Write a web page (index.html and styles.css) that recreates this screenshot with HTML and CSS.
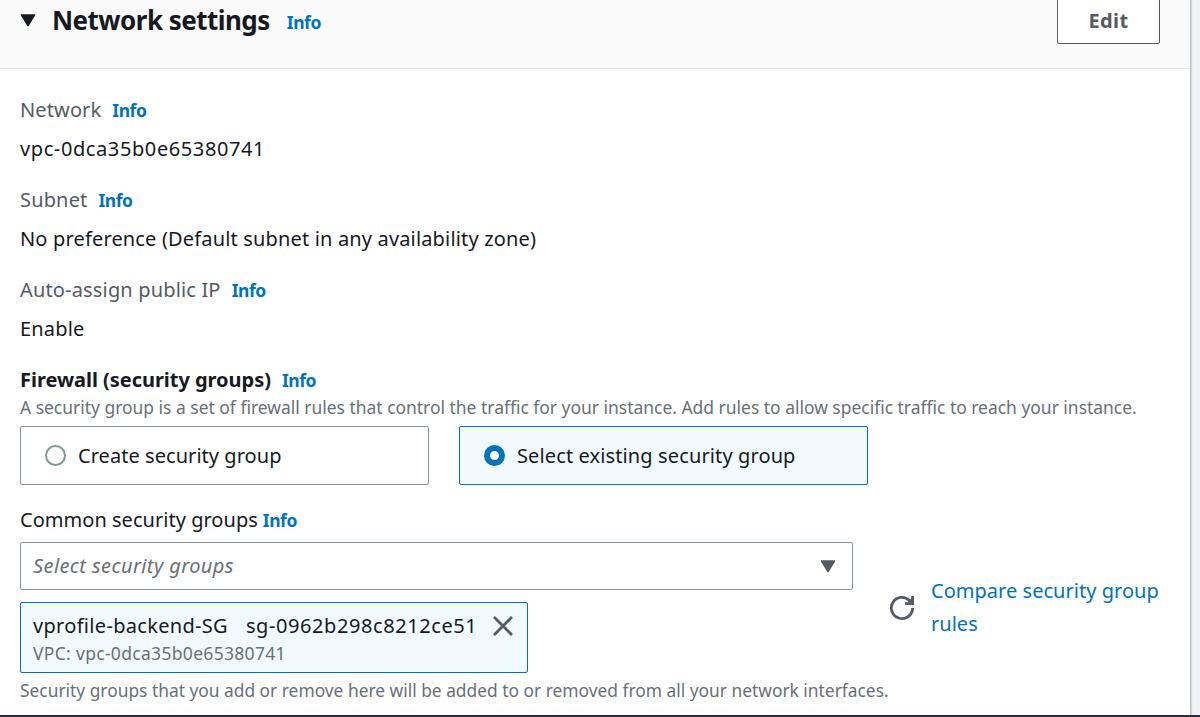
FILE: index.html
```
<!DOCTYPE html>
<html lang="en">
<head>
<meta charset="utf-8">
<title>Network settings</title>
<link rel="stylesheet" href="styles.css">
</head>
<body>
<main class="panel">
  <header class="panel-header">
    <svg class="caret" width="16" height="13" viewBox="0 0 16 13"><path d="M1.500 1h13L8 11.500z" fill="#16191f" stroke="#16191f" stroke-width="1.500" stroke-linejoin="round"/></svg>
    <h2 class="title">Network settings</h2>
    <a class="info info-title">Info</a>
    <button class="edit">Edit</button>
  </header>
  <section class="content">
    <div class="field">
      <div class="label"><span class="t-network">Network</span><a class="info">Info</a></div>
      <div class="value t-vpc">vpc-0dca35b0e65380741</div>
    </div>
    <div class="field">
      <div class="label"><span class="t-label">Subnet</span><a class="info">Info</a></div>
      <div class="value t-label">No preference (Default subnet in any availability zone)</div>
    </div>
    <div class="field">
      <div class="label"><span class="t-label">Auto-assign public IP</span><a class="info">Info</a></div>
      <div class="value t-label">Enable</div>
    </div>
    <div class="firewall-label"><span class="t-firewall">Firewall (security groups)</span><a class="info">Info</a></div>
    <p class="hint">A security group is a set of firewall rules that control the traffic for your instance. Add rules to allow specific traffic to reach your instance.</p>
    <div class="tiles">
      <div class="tile"><span class="radio"></span><span class="t-create">Create security group</span></div>
      <div class="tile selected"><span class="radio"></span><span class="t-existing">Select existing security group</span></div>
    </div>
    <div class="groups-label"><span class="t-common">Common security groups</span><a class="info">Info</a></div>
    <div class="groups-row">
      <div class="groups-main">
        <div class="select"><span class="t-placeholder">Select security groups</span>
          <svg width="16" height="13" viewBox="0 0 16 13"><path d="M1.500 1h13L8 11.500z" fill="#545b64" stroke="#545b64" stroke-width="1.500" stroke-linejoin="round"/></svg>
        </div>
        <div class="token">
          <div class="token-text">
            <div class="token-name"><span class="t-name">vprofile-backend-SG</span><span class="t-id">sg-0962b298c8212ce51</span></div>
            <div class="token-vpc">VPC: vpc-0dca35b0e65380741</div>
          </div>
          <svg class="close" width="20" height="20" viewBox="0 0 20 20"><path d="M1 1l18 18M19 1L1 19" stroke="#545b64" stroke-width="2.700"/></svg>
        </div>
      </div>
      <svg class="refresh" width="26" height="26" viewBox="0 0 26 26" fill="none" stroke="#545b64" stroke-width="2.800"><path d="M23.600 13A10.600 10.600 0 1 1 20.500 5.500L22 7"/><path d="M23.600 1v7.600H16"/><path d="M18 7.500l5-5v5z" fill="#545b64" stroke="none"/></svg>
      <a class="compare">Compare security group<br>rules</a>
    </div>
    <p class="hint hint-footer">Security groups that you add or remove here will be added to or removed from all your network interfaces.</p>
  </section>
</main>
<div class="bottom-bar"></div>
</body>
</html>
```
FILE: styles.css
```
* { box-sizing: border-box; }
html, body { margin: 0; height: 717px; overflow: hidden; }
body { background: #f2f3f3; color: #16191f; font: 20px/30px "Noto Sans", sans-serif; display: flex; flex-direction: column; }
.panel { width: 1191px; height: 715px; background: #fff; border-right: 1px solid #b6bec9; box-shadow: 1px 0 1px #d5dbdb; }
.panel-header { height: 69px; background: #fafafa; border-bottom: 1px solid #e4e9e9; display: flex; align-items: flex-start; padding: 0 30px 0 20px; }
.caret { margin-top: 14px; }
.title { margin: 4px 0 0 16px; font-size: 26px; line-height: 32px; font-weight: 700; letter-spacing: -0.530px; white-space: nowrap; }
.info { color: #0073bb; font-size: 17.500px; font-weight: 700; letter-spacing: -0.450px; }
.info-title { margin: 7px 0 0 17px; }
.edit { margin: -2px 0 0 auto; width: 103px; height: 46px; background: #fff; border: 1px solid #545b64; border-radius: 2px; font: 700 20px/44px "Noto Sans", sans-serif; letter-spacing: 0.400px; color: #545b64; padding: 0; }
.content { padding: 26px 20px 0; }
.field { display: grid; gap: 9px; margin-bottom: 21px; }
.label, .firewall-label, .groups-label { display: flex; align-items: baseline; gap: 11px; height: 30px; white-space: nowrap; }
.label { color: #545b64; }
.firewall-label { font-weight: 700; }
.hint { margin: 0; font-size: 17.450px; line-height: 24px; color: #687078; white-space: nowrap; }
.tiles { display: flex; gap: 30px; margin-top: 7px; }
.tile { width: 409px; height: 59px; border: 1px solid #879596; border-radius: 2px; display: flex; align-items: center; padding-left: 24px; gap: 12px; white-space: nowrap; }
.radio { width: 21px; height: 21px; border: 2px solid #879596; border-radius: 50%; }
.selected { background: #f1faff; border-color: #0073bb; }
.selected .radio { border: 6px solid #0073bb; background: #fff; }
.groups-label { margin-top: 20px; gap: 5px; }
.groups-row { display: flex; margin-top: 7px; }
.groups-main { width: 833px; }
.select { height: 48px; border: 1px solid #879596; border-radius: 2px; display: flex; align-items: center; justify-content: space-between; padding: 0 16px 0 12px; color: #687078; font-style: italic; }
.token { margin-top: 12px; width: 508px; height: 71px; border: 1px solid #0073bb; border-radius: 2px; background: #f1faff; display: flex; padding: 8px 14px 0 12px; justify-content: space-between; white-space: nowrap; }
.token-name { display: flex; gap: 18px; }
.token-vpc { font-size: 17.500px; line-height: 24px; letter-spacing: 0.310px; color: #687078; }
.close { margin-top: 5px; }
.refresh { margin: 53px 16px 0 36px; }
.compare { color: #0073bb; line-height: 33px; margin-top: 32px; letter-spacing: 0.030px; white-space: nowrap; }
.hint-footer { margin-top: 5px; font-size: 17.380px; }
.t-network { letter-spacing: 0.120px; }
.t-label { letter-spacing: 0.160px; }
.t-vpc { letter-spacing: 0.600px; }
.t-firewall { letter-spacing: -0.030px; }
.t-create { letter-spacing: 0.050px; }
.t-existing { letter-spacing: 0.120px; }
.t-common { letter-spacing: 0.030px; }
.t-placeholder { letter-spacing: 0.410px; }
.t-name { letter-spacing: 0.310px; }
.t-id { letter-spacing: 0.580px; }
.bottom-bar { height: 2px; background: #232f3e; }
```
